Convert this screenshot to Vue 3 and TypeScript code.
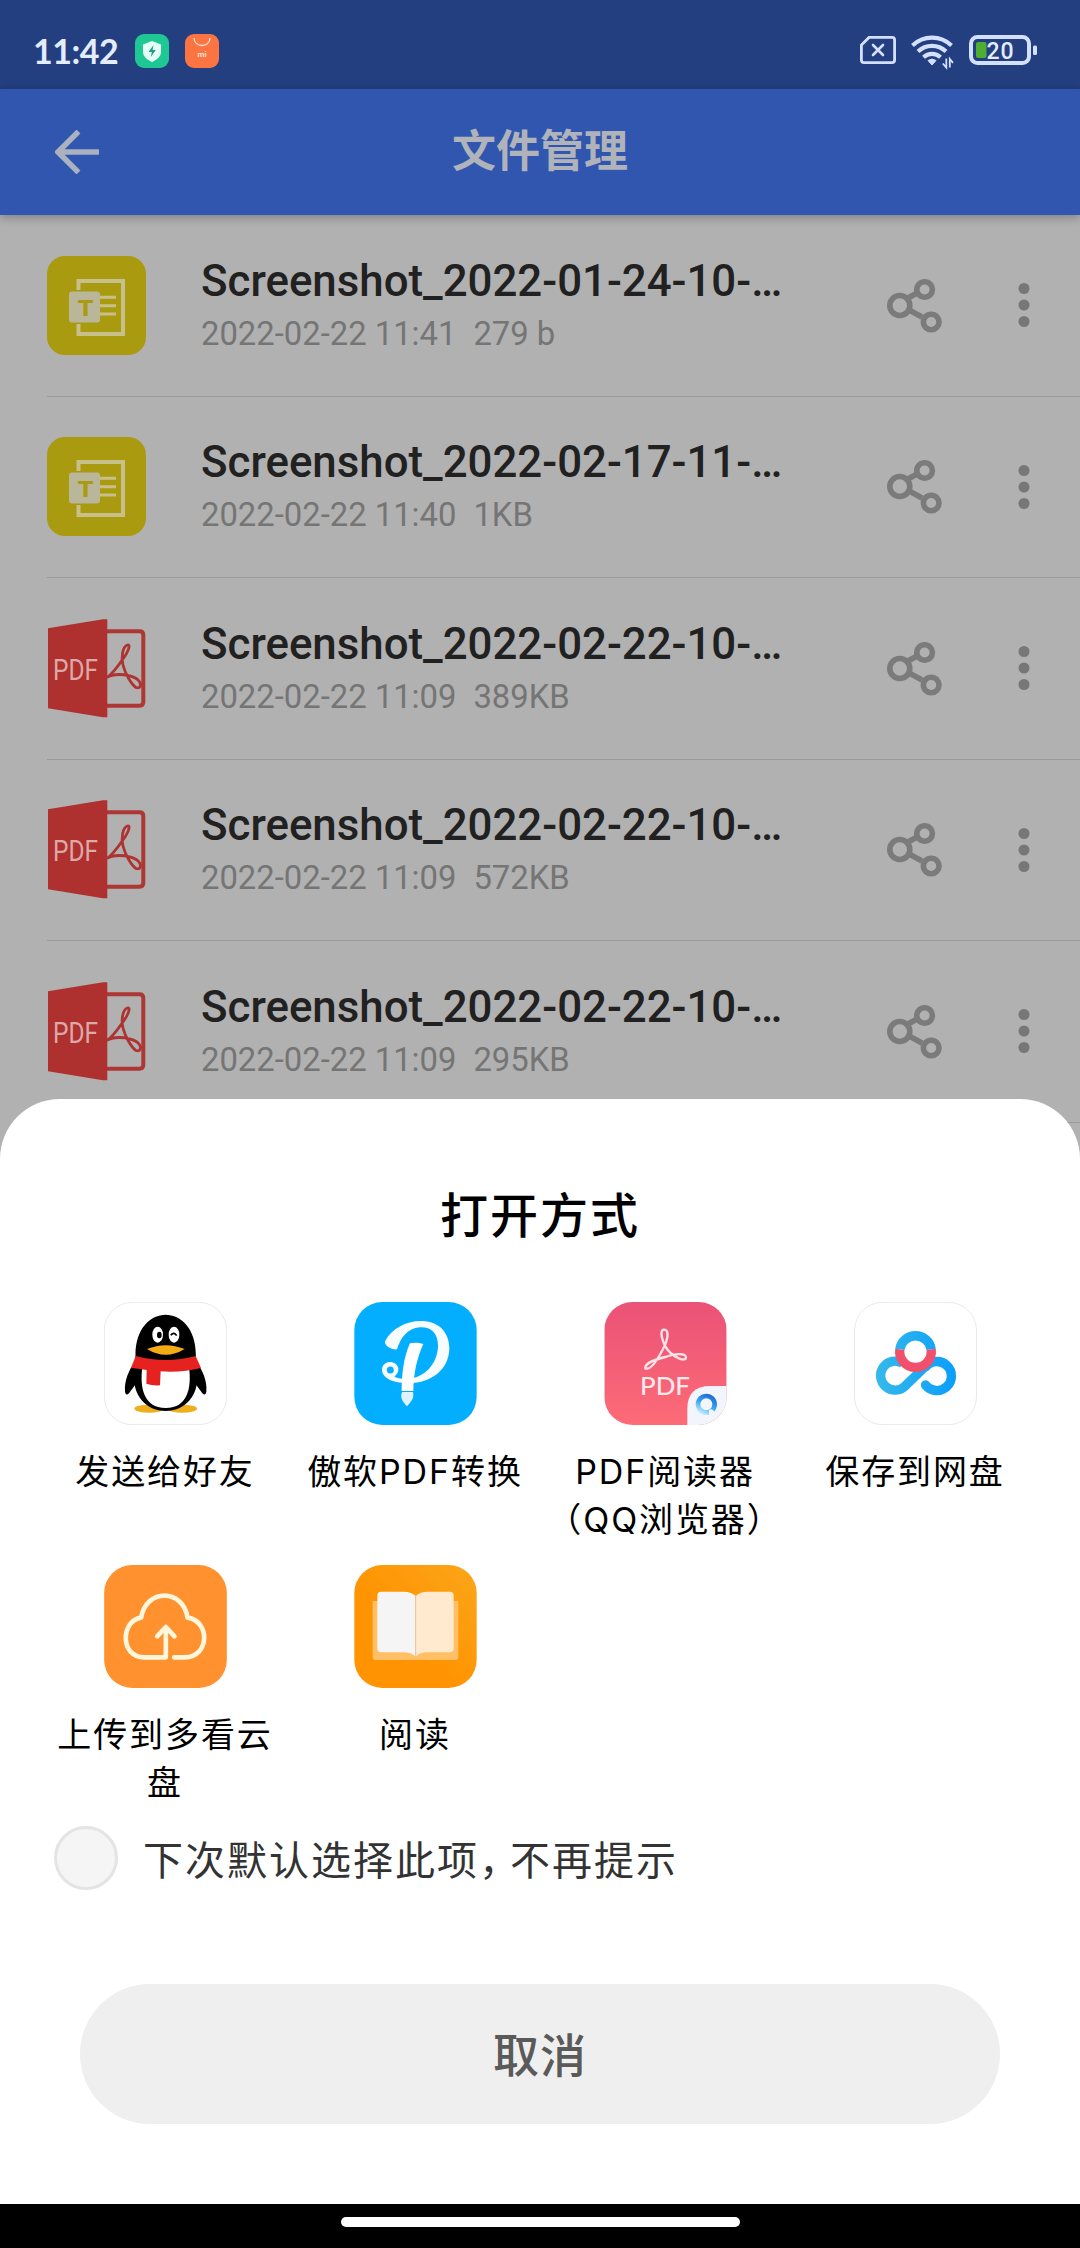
<template>
  <div class="screen">
    <div class="status-bar">
      <span class="time">11:42</span>
      <svg class="notif" viewBox="0 0 34 34">
        <rect width="34" height="34" rx="9" fill="#1fc795" />
        <path d="M17 7 L26 10.5 V18 C26 23 21 26 17 28 C13 26 8 23 8 18 V10.5 Z" fill="#e6fff6" />
        <path d="M18.5 11 L13.5 18 H16.8 L15.8 23 L20.8 16 H17.6 Z" fill="#1c9f86" />
      </svg>
      <svg class="notif" viewBox="0 0 34 34">
        <rect width="34" height="34" rx="9" fill="#fd7443" />
        <path d="M9 4 C9 14 25 14 25 4" fill="none" stroke="#ffe3d0" stroke-width="1.3" />
        <text x="17" y="23" text-anchor="middle" font-size="8" font-weight="600" fill="#ffe9dc">mi</text>
      </svg>
      <svg class="status-icons" viewBox="861 30 180 42">
        <g fill="none" stroke="#d3e0ff" stroke-width="2.8">
          <path d="M870 37.4 H893 Q895.6 37.4 895.6 40 V60 Q895.6 62.6 893 62.6 H865 Q862.4 62.6 862.4 60 V45 Z" />
          <path d="M874 45 L884 55 M884 45 L874 55" stroke-width="2.6" stroke-linecap="round" />
          <path d="M913.5 45.5 A28 28 0 0 1 952.5 45.5" stroke-width="4.2" />
          <path d="M919 51.5 A20 20 0 0 1 947 51.5" stroke-width="4.2" />
          <path d="M924.5 57.3 A12.5 12.5 0 0 1 941.5 57.3" stroke-width="4.2" />
          <rect x="972" y="37" width="58" height="26" rx="6.5" stroke-width="4" />
        </g>
        <path d="M933 65 L929 60.5 Q933 57.5 937 60.5 Z" fill="#d3e0ff" stroke="#d3e0ff" stroke-width="1" />
        <path d="M947.3 58.5 V67.5 L943.8 63.5 M950.8 67.5 V59 L954 62.8" fill="none" stroke="#d3e0ff" stroke-width="1.8" />
        <rect x="1034" y="45.5" width="4" height="9.5" rx="1.5" fill="#d3e0ff" />
        <rect x="977" y="42" width="10.5" height="16" rx="2" fill="#4fae32" />
        <text x="987.5" y="58.5" font-size="23" font-weight="500" fill="#e4ecff" textLength="27">20</text>
      </svg>
    </div>

    <header class="app-bar">
      <svg class="back" viewBox="0 0 44 44">
        <path d="M23.5 1.5 L3 22 L23.5 42.5 M3 22 H44" fill="none" stroke="#abb1bf" stroke-width="5.5" />
      </svg>
      <h1>文件管理</h1>
    </header>

    <ul class="file-list">
      <li v-for="(file, i) in files" :key="i" class="file-row">
        <svg v-if="file.type === 'txt'" class="file-icon" viewBox="0 0 99 99">
          <rect width="99" height="99" rx="18" fill="#a99a10" />
          <rect x="31.5" y="25" width="44.5" height="53" fill="none" stroke="#c8c08a" stroke-width="4" />
          <path d="M26 34 H48 L54 40 V62 L48 68 H26 Z" fill="#a99a10" />
          <rect x="22" y="35.5" width="31" height="31" rx="3" fill="#b9b699" />
          <path d="M53 41.3 H69 M53 49.8 H69 M53 58 H69" stroke="#c8c08a" stroke-width="3" />
          <text x="38.5" y="59.5" text-anchor="middle" class="txt-mark">T</text>
        </svg>
        <svg v-else class="file-icon" viewBox="0 0 99 99">
          <path d="M60 12.3 H92.5 Q96.3 12.3 96.3 16 V83 Q96.3 86.7 92.5 86.7 H60" fill="none" stroke="#ad3734" stroke-width="4" />
          <path d="M1 9.3 L56 0.3 H60.3 V98.3 H56 L1 89.3 Z" fill="#ae302f" />
          <path d="M60 58.5 C67 54 73 44 78 37 C83 29 83 25 80.3 26 C75.5 28 74 38 76 46 C78 54 84 65 89 68.5 C93 70 95 66 92 62 C88 57 78 55.5 72 55.5 C66 55.5 62 57 60 58.5" fill="none" stroke="#ad3432" stroke-width="2.8" />
          <text x="6" y="61" font-size="29" fill="#dda9a7" textLength="45" lengthAdjust="spacingAndGlyphs">PDF</text>
        </svg>
        <div class="file-info">
          <div class="file-name">{{ file.name }}</div>
          <div class="file-meta"><span>{{ file.date }}</span><span>{{ file.size }}</span></div>
        </div>
        <svg class="share" viewBox="887 277 55 55">
          <g fill="none" stroke="#7b7b7b" stroke-width="5.6">
            <path d="M908 297 L918 291.5 M910 309.5 L922 316" />
            <circle cx="899.8" cy="304.5" r="10" />
            <circle cx="924.6" cy="288.5" r="7.8" />
            <circle cx="931.2" cy="321" r="7.8" />
          </g>
        </svg>
        <svg class="more" viewBox="0 0 12 46">
          <g fill="#777">
            <circle cx="6" cy="6.5" r="5.5" />
            <circle cx="6" cy="23" r="5.5" />
            <circle cx="6" cy="39.5" r="5.5" />
          </g>
        </svg>
      </li>
    </ul>

    <section class="sheet">
      <h2>打开方式</h2>
      <div class="apps">
        <div v-for="app in apps" :key="app.icon" class="app">
          <svg v-if="app.icon === 'qq'" class="app-icon" viewBox="70 64 369 369">
            <rect x="71" y="65" width="367" height="367" rx="84" fill="#fff" stroke="#dedede" stroke-width="2" />
            <ellipse cx="205" cy="384" rx="44" ry="12" fill="#eeae1d" />
            <ellipse cx="305" cy="384" rx="44" ry="12" fill="#eeae1d" />
            <path d="M164 240 C145 268 130 300 133 332 Q135 348 145 338 L167 308 Z" fill="#000" />
            <path d="M346 240 C365 268 380 300 377 332 Q375 348 365 338 L343 308 Z" fill="#000" />
            <path d="M165 240 C152 56 358 56 345 240 L350 290 C350 425 160 425 160 290 Z" fill="#000" />
            <path d="M185 260 H325 C333 320 322 382 255 382 C188 382 177 320 185 260 Z" fill="#fff" />
            <path d="M165 226 Q255 250 345 226 L361 262 Q305 276 240 272 L238 314 Q216 316 197 309 L198 268 Q170 264 151 262 Z" fill="#e5221f" />
            <ellipse cx="231" cy="162" rx="16" ry="24" fill="#fff" />
            <ellipse cx="280" cy="162" rx="16" ry="24" fill="#fff" />
            <ellipse cx="236" cy="163" rx="7" ry="10" fill="#000" />
            <path d="M270 164 Q280 152 288 165" fill="none" stroke="#000" stroke-width="5" />
            <path d="M199 205 Q255 182 312 205 Q255 240 199 205 Z" fill="#f3ab14" />
          </svg>

          <svg v-else-if="app.icon === 'apowersoft'" class="app-icon" viewBox="822 64 367 369">
            <rect x="822" y="64" width="367" height="369" rx="84" fill="#04aefe" />
            <path d="M914 182 C935 142 980 119 1027 121 C1078 123 1108 158 1107 205 C1105 268 1050 310 980 307 C940 306 906 294 905 267 C906 238 948 236 954 263 C955 274 950 281 942 288 C952 293 965 295 980 295 C1032 292 1072 250 1073 195 C1073 155 1050 138 1018 140 C982 143 961 170 950 206 C936 208 912 198 914 182 Z" fill="#f7fdff" />
            <circle cx="930" cy="268" r="10.5" fill="#04aefe" />
            <path d="M989 188 Q1010 184 1029 190 C1008 236 1000 280 999 331 H964 C964 280 970 230 989 188 Z" fill="#fff" />
            <path d="M965 334 H998 C1003 353 991 364 980 377 C968 364 958 352 965 334 Z" fill="#def3ff" />
          </svg>

          <svg v-else-if="app.icon === 'qqpdf'" class="app-icon" viewBox="192 64 367 369">
            <defs>
              <linearGradient id="pdfBg" x1="0" y1="0" x2="0" y2="1">
                <stop offset="0" stop-color="#ea5277" />
                <stop offset="1" stop-color="#fd6b77" />
              </linearGradient>
              <linearGradient id="qbRing" x1="0.2" y1="1" x2="0.7" y2="0">
                <stop offset="0" stop-color="#bfeaff" />
                <stop offset="0.5" stop-color="#36a5f0" />
                <stop offset="1" stop-color="#2173d8" />
              </linearGradient>
              <clipPath id="pdfClip"><rect x="192" y="64" width="367" height="369" rx="84" /></clipPath>
            </defs>
            <g clip-path="url(#pdfClip)">
              <rect x="192" y="64" width="367" height="369" fill="url(#pdfBg)" />
              <path d="M441 433 V385 Q441 316 510 316 H559 V433 Z" fill="#f2f6fc" />
              <circle cx="498" cy="371" r="25" fill="none" stroke="url(#qbRing)" stroke-width="14" />
              <path d="M506 388 Q514 382 520 390 L528 404 H506 Z" fill="#f2f6fc" />
            </g>
            <path d="M371 147 C390 147 380 185 368 205 C350 240 330 270 315 263 C312 248 350 235 375 229 C400 220 435 215 437 230 C436 245 405 232 390 216 C370 198 353 148 371 147 Z" fill="none" stroke="#ffe3e6" stroke-width="7" />
            <text x="299" y="344" font-size="73" class="pdf-mark" textLength="150" lengthAdjust="spacingAndGlyphs">PDF</text>
          </svg>

          <svg v-else-if="app.icon === 'netdisk'" class="app-icon" viewBox="941 64 368 369">
            <defs>
              <linearGradient id="diskRing" gradientUnits="userSpaceOnUse" x1="1005" y1="0" x2="1242" y2="0">
                <stop offset="0" stop-color="#36b9ea" />
                <stop offset="1" stop-color="#0b9ffb" />
              </linearGradient>
            </defs>
            <rect x="942" y="65" width="366" height="367" rx="84" fill="#fff" stroke="#dedede" stroke-width="2" />
            <g fill="none" stroke="url(#diskRing)" stroke-width="28">
              <path d="M1087 248 A43.5 43.5 0 1 0 1095 315 L1150 262" />
              <path d="M1156 258 A43.5 43.5 0 1 1 1155 313" stroke-linecap="round" />
              <path d="M1078 206 A47.5 47.5 0 0 1 1172 206" />
            </g>
            <path d="M1078 206 A47.5 47.5 0 1 0 1172 206" fill="none" stroke="#f1506d" stroke-width="28" />
          </svg>

          <svg v-else-if="app.icon === 'duokan'" class="app-icon" viewBox="192 72 368 369">
            <rect x="192" y="72" width="368" height="369" rx="84" fill="#ff922e" />
            <g fill="none" stroke="#fff6dc" stroke-width="14" stroke-linecap="round" stroke-linejoin="round">
              <path d="M402 349 H434 C508 349 512 240 442 230 C430 142 316 142 303 230 C240 240 240 349 312 349 H377 V262" />
              <path d="M351 286 L377 258 L403 286" />
            </g>
          </svg>

          <svg v-else class="app-icon" viewBox="942 72 367 369">
            <defs>
              <linearGradient id="bookBg" x1="1" y1="0" x2="0.4" y2="0.6">
                <stop offset="0" stop-color="#fba619" />
                <stop offset="1" stop-color="#ff9301" />
              </linearGradient>
            </defs>
            <rect x="942" y="72" width="367" height="369" rx="84" fill="url(#bookBg)" />
            <path d="M997 180 H1254 V347 Q1254 357 1244 357 H1007 Q997 357 997 347 Z" fill="#ffc065" />
            <path d="M1125 164 Q1112 152 1090 152 H1023 Q1011 152 1011 164 V322 Q1011 334 1023 334 H1090 Q1112 334 1125 346 Z" fill="#f5f5f5" />
            <path d="M1127 164 Q1140 152 1160 152 H1228 Q1240 152 1240 164 V322 Q1240 334 1228 334 H1160 Q1140 334 1127 346 Z" fill="#ffe9cf" />
            <path d="M1126 162 V346" stroke="#e9c79c" stroke-width="3" />
          </svg>
          <div class="app-label">
            <div v-for="line in app.label" :key="line">{{ line }}</div>
          </div>
        </div>
      </div>

      <label class="remember">
        <span class="radio"></span>
        <span class="remember-text">下次默认选择此项<span class="comma">，</span>不再提示</span>
      </label>

      <button class="cancel">取消</button>
      <div class="nav-bar"><span class="nav-handle"></span></div>
    </section>
  </div>
</template>

<script setup lang="ts">
interface FileItem {
  type: 'txt' | 'pdf';
  name: string;
  date: string;
  size: string;
}

interface AppItem {
  icon: string;
  label: string[];
}

const files: FileItem[] = [
  { type: 'txt', name: 'Screenshot_2022-01-24-10-…', date: '2022-02-22 11:41', size: '279 b' },
  { type: 'txt', name: 'Screenshot_2022-02-17-11-…', date: '2022-02-22 11:40', size: '1KB' },
  { type: 'pdf', name: 'Screenshot_2022-02-22-10-…', date: '2022-02-22 11:09', size: '389KB' },
  { type: 'pdf', name: 'Screenshot_2022-02-22-10-…', date: '2022-02-22 11:09', size: '572KB' },
  { type: 'pdf', name: 'Screenshot_2022-02-22-10-…', date: '2022-02-22 11:09', size: '295KB' },
];

const apps: AppItem[] = [
  { icon: 'qq', label: ['发送给好友'] },
  { icon: 'apowersoft', label: ['傲软PDF转换'] },
  { icon: 'qqpdf', label: ['PDF阅读器', '（QQ浏览器）'] },
  { icon: 'netdisk', label: ['保存到网盘'] },
  { icon: 'duokan', label: ['上传到多看云', '盘'] },
  { icon: 'reader', label: ['阅读'] },
];
</script>

<style>
body { margin: 0; background: #b1b1b1; }
</style>

<style scoped>
.screen { position: relative; width: 1080px; height: 2248px; overflow: hidden; background: #b1b1b1; font-family: Roboto, "Noto Sans CJK SC", sans-serif; }
svg { display: block; flex: none; }
.status-bar { display: flex; align-items: center; box-sizing: border-box; height: 89px; padding: 12px 40px 0 33px; background: #243f80; }
.time { width: 84px; margin-right: 18px; color: #e4ecff; font-family: Lato, sans-serif; font-size: 34px; font-weight: 700; line-height: 40px; letter-spacing: -0.5px; white-space: nowrap; }
.notif { width: 34px; height: 34px; margin-right: 16px; }
.status-icons { width: 180px; height: 42px; margin-left: auto; }

.app-bar { position: relative; display: flex; align-items: center; box-sizing: border-box; height: 126px; padding: 0 55px; background: #3056af; box-shadow: 0 2px 10px rgba(0, 0, 0, 0.3); }
.back { width: 44px; height: 44px; }
h1 { flex: 1; margin: 0 44px 0 0; padding-bottom: 1px; color: #b0b3ba; font-size: 44px; font-weight: 700; line-height: 60px; text-align: center; }

.file-list { margin: 0; padding: 0 0 0 47px; list-style: none; }
.file-row { display: flex; align-items: center; box-sizing: border-box; height: 181.5px; padding-right: 50px; border-bottom: 1px solid #999; }
.file-icon { width: 99px; height: 99px; }
.file-info { flex: 1; margin-left: 55px; }
.file-name { height: 57px; color: #212121; font-size: 43.8px; font-weight: 500; line-height: 55px; white-space: nowrap; }
.file-meta { display: flex; gap: 17px; height: 46px; color: #757575; font-size: 32.8px; line-height: 46px; white-space: nowrap; }
.share { width: 55px; height: 55px; margin-right: 76px; }
.more { width: 12px; height: 46px; }
.txt-mark { fill: #a99a10; font-family: "DejaVu Sans", sans-serif; font-size: 22px; font-weight: 700; }
.pdf-mark { fill: #ffe9ea; font-family: Lato, sans-serif; font-weight: 500; }

.sheet { position: absolute; left: 0; right: 0; bottom: 0; display: flex; flex-direction: column; height: 1149px; border-radius: 60px 60px 0 0; background: #fff; font-family: "Noto Sans CJK SC", sans-serif; }
h2 { margin: 78px 0 0; color: #000; font-size: 48px; font-weight: 500; line-height: 70px; letter-spacing: 2px; text-align: center; }
.apps { display: grid; grid-template-columns: repeat(4, 250px); grid-auto-rows: 262.5px; margin: 55px 40px 0; }
.app { display: flex; flex-direction: column; align-items: center; }
.app-icon { width: 123px; height: 123px; }
.app-label { margin-top: 23px; color: #000; font-family: Inter, "Noto Sans CJK SC", sans-serif; font-size: 34px; line-height: 48px; letter-spacing: 1.9px; text-align: center; white-space: nowrap; }
.remember { display: flex; align-items: center; height: 64px; margin: -1px 54px 0; }
.radio { box-sizing: border-box; width: 64px; height: 64px; border: 3px solid #e4e4e4; border-radius: 50%; background: #f5f5f5; }
.remember-text { margin-left: 25px; color: #333; font-size: 40px; line-height: 60px; letter-spacing: 2px; white-space: nowrap; }
.comma { margin-right: 9px; font-feature-settings: "halt"; }
.cancel { height: 140px; margin: 94px 80px 0; padding: 0 0 4px; border: none; border-radius: 70px; background: #efefef; color: #5a5a5a; font-family: "Noto Sans CJK SC", sans-serif; font-size: 46px; font-weight: 500; letter-spacing: 1px; }
.nav-bar { display: flex; justify-content: center; box-sizing: border-box; height: 44px; margin-top: auto; padding-top: 13px; background: #000; }
.nav-handle { width: 399px; height: 10px; border-radius: 5px; background: #fff; }
</style>
